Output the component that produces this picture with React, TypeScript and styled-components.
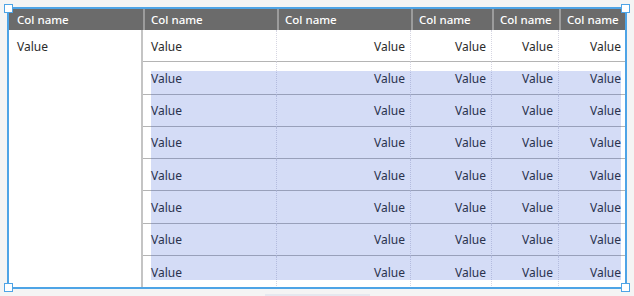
import React from 'react';
import styled, { createGlobalStyle } from 'styled-components';

const columns = ['Col name', 'Col name', 'Col name', 'Col name', 'Col name', 'Col name'];
const rowCount = 8;

const App = () => {
    return (
        <Page>
            <GlobalStyle />
            <TableFrame>
                <Grid>
                    {columns.map((name, i) => (
                        <HeadCell key={'h' + i} first={i === 0}>{name}</HeadCell>
                    ))}
                    <GroupCell style={{ gridRow: `2 / span ${rowCount}` }}>Value</GroupCell>
                    {Array.from({ length: rowCount }).map((_, r) =>
                        columns.slice(1).map((_, c) => (
                            <BodyCell key={r + '_' + c} numeric={c > 0} last={c === columns.length - 2} lastRow={r === rowCount - 1}>
                                Value
                            </BodyCell>
                        ))
                    )}
                </Grid>
                <Highlight />
                <SelectionBox>
                    <Handle top left />
                    <Handle top />
                    <Handle left />
                    <Handle />
                </SelectionBox>
            </TableFrame>
            <ScrollThumb />
        </Page>
    );
};

const GlobalStyle = createGlobalStyle`
  html, body {
    margin: 0;
    background: #f4f4f4;
  }
  body {
    padding: 8px;
    font-family: "Noto Sans", "Open Sans", sans-serif;
    overflow: hidden;
  }
`;

const Page = styled.div`
  display: flex;
  flex-direction: column;
  align-items: center;
  gap: 6px;
`;

const TableFrame = styled.div`
  position: relative;
  width: 618px;
  background: #fff;
`;

const Grid = styled.div`
  display: grid;
  grid-template-columns: 135px 134px 134px 81px 67px 67px;
  grid-template-rows: 22px repeat(8, 1fr);
  height: 280px;
`;

const HeadCell = styled.div<{ first?: boolean }>`
  display: flex;
  align-items: center;
  padding: ${({ first }) => (first ? '0 0 0 9px' : '0 0 0 6px')};
  background: #6b6b6b;
  color: #fff;
  font-size: 11.5px;
  font-weight: 500;
  border-left: ${({ first }) => (first ? 'none' : '2px solid #9c9c9c')};
  white-space: nowrap;
  overflow: hidden;
`;

const GroupCell = styled.div`
  grid-column: 1;
  padding: 9px 9px;
  font-size: 12px;
  line-height: 16px;
  color: #2b2b2b;
  border-right: 2px solid #c4c4c4;
`;

const BodyCell = styled.div<{ numeric?: boolean; last?: boolean; lastRow?: boolean }>`
  display: flex;
  align-items: center;
  justify-content: ${({ numeric }) => (numeric ? 'flex-end' : 'flex-start')};
  padding: ${({ numeric }) => (numeric ? '1px 5px 0 0' : '1px 0 0 8px')};
  font-size: 12px;
  color: #2b2b2b;
  border-bottom: ${({ lastRow }) => (lastRow ? 'none' : '1px solid #b4b4b4')};
  border-right: ${({ last }) => (last ? 'none' : '1px dotted #d6d6e2')};
`;

const Highlight = styled.div`
  position: absolute;
  left: 143px;
  top: 63px;
  width: 470px;
  height: 209px;
  background: rgba(40, 80, 210, 0.2);
  pointer-events: none;
`;

const SelectionBox = styled.div`
  position: absolute;
  inset: -1px;
  border: 2px solid #4ea4e6;
  pointer-events: none;
`;

const Handle = styled.div<{ top?: boolean; left?: boolean }>`
  position: absolute;
  width: 7px;
  height: 7px;
  background: #fff;
  border: 1.5px solid #4ea4e6;
  ${({ top }) => (top ? 'top: -5px;' : 'bottom: -5px;')}
  ${({ left }) => (left ? 'left: -5px;' : 'right: -5px;')}
`;

const ScrollThumb = styled.div`
  width: 105px;
  height: 8px;
  background: #e5e8ef;
`;

export default App;
